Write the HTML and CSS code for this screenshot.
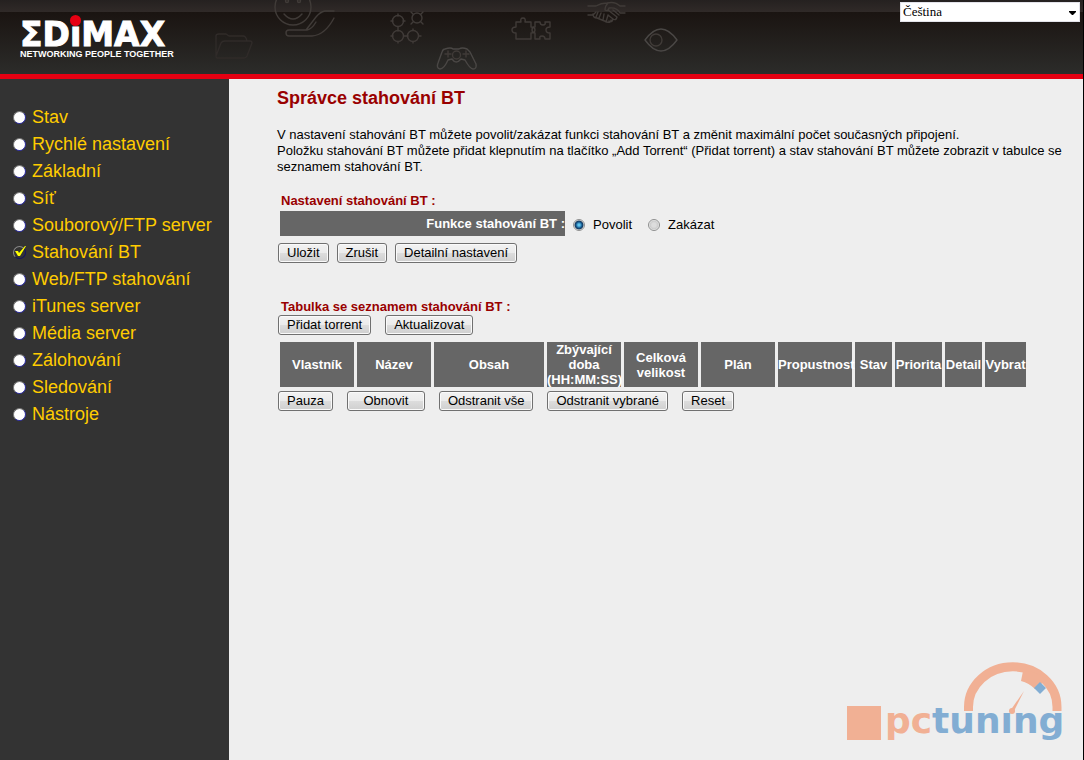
FILE: index.html
```
<!DOCTYPE html>
<html lang="cs">
<head>
<meta charset="utf-8">
<title>Správce stahování BT</title>
<link rel="stylesheet" href="styles.css">
</head>
<body>
<header class="header">
  <svg class="header-art" width="480" height="74" viewBox="210 0 480 74" aria-hidden="true">
    <g fill="none" stroke="#403b38" stroke-width="1.4" stroke-linejoin="round" stroke-linecap="round">
      <path stroke="#302b29" d="M216 56V36q0-2 3-2h7l3 2h14q3 0 4 5M217 58h27q2 0 3-2l5-13q0-2-2-2h-25q-3 0-4 2l-5 13q0 2 1 2"/>
      <circle cx="293" cy="7" r="18"/><path d="M284 14q9 10 18 0"/><circle cx="287" cy="1" r="1.5"/><circle cx="299" cy="1" r="1.5"/>
      <path d="M334 11h-9q-5 1-9 6l-10 13h-17q-3 0-3 3t3 3h23q13-1 22-18M307 30q5-1 9-8"/>
      <circle cx="398" cy="21" r="5.500"/><circle cx="417" cy="18" r="5"/><circle cx="398" cy="36" r="5.500"/><circle cx="413" cy="36" r="5.500"/>
      <path d="M398 14v2M391 21h2M403 21h2M398 27v4M391 36h2M398 42v1M404 36h4M413 29v1M413 42v1M419 36h2M411 12l2 2M423 12l-2 2M411 24l2-2M423 24l-2-2"/>
      <path stroke="#4a4745" d="M445 49q6-2 8 0h6q3-2 8 0l3 3 6 12q1 5-3 5-3 0-8-9l-4-1q-5 6-9 0l-4 1q-4 9-8 9-4-1-2-6l4-11q1-3 3-3z"/>
      <circle cx="456.500" cy="55" r="4"/><path d="M445 54h6M448 51v6M463 54h6M466 51v6"/>
      <path d="M516 39v-6q-4 0-4-3t4-3v-5h5q-1-4 2-4t2 4h6v5q4 0 4 3t-4 3v6zM535 39v-6q-3 0-3-3t3-3v-5h5q0 3 3 3t2-3h5v5q-4 0-4 3t4 3v6h-5q0-3-3-3t-2 3z"/>
      <path d="M588 6h8q5-3 11-3 8-2 13 3h5M588 15h5l3-3M625 13h-5q-3-6-11-5-1 4-4 2 0-4 3-7M593 14q0 4 4 4l5 2 5 2q4 1 4-2M598 12l-2 5M601 13l-2 5M604 14l-1 6M608 15l-2 7M608 10l9 7q-1 4-4 2l-5-4M613 10l6 5M609 21q3 2 4-2"/>
      <path stroke="#4a4745" d="M645 40q16-22 32 0q-16 22-32 0"/><circle cx="656" cy="40" r="6"/>
    </g>
  </svg>
  <a class="brand" href="#">
    <span class="brand-name">ΣDıMAX</span>
    <span class="brand-dot"></span>
    <span class="brand-tag">NETWORKING PEOPLE TOGETHER</span>
  </a>
  <div class="language">
    <select class="language-select" aria-label="Jazyk"><option>Čeština</option></select>
    <svg class="language-arrow" width="7" height="4" viewBox="0 0 7 4" aria-hidden="true"><path d="M0 0h7v1L4 4H3L0 1z"/></svg>
  </div>
</header>
<div class="layout">
  <nav class="sidebar">
    <ul class="menu">
      <li><a href="#">Stav</a></li>
      <li><a href="#">Rychlé nastavení</a></li>
      <li><a href="#">Základní</a></li>
      <li><a href="#">Síť</a></li>
      <li><a href="#">Souborový/FTP server</a></li>
      <li class="current"><a href="#" aria-current="page">Stahování BT</a><svg class="tick" width="12" height="11" viewBox="0 0 12 11" aria-hidden="true"><path d="M1 5h3l1 2 6-7h1L6 10H4z" fill="#ffff00"/></svg></li>
      <li><a href="#">Web/FTP stahování</a></li>
      <li><a href="#">iTunes server</a></li>
      <li><a href="#">Média server</a></li>
      <li><a href="#">Zálohování</a></li>
      <li><a href="#">Sledování</a></li>
      <li><a href="#">Nástroje</a></li>
    </ul>
  </nav>
  <main class="content">
    <h1 class="title">Správce stahování BT</h1>
    <p class="intro">V nastavení stahování BT můžete povolit/zakázat funkci stahování BT a změnit maximální počet současných připojení.<br>Položku stahování BT můžete přidat klepnutím na tlačítko „Add Torrent“ (Přidat torrent) a stav stahování BT můžete zobrazit v tabulce se seznamem stahování BT.</p>

    <h2 class="section-title">Nastavení stahování BT :</h2>
    <div class="setting" role="radiogroup" aria-labelledby="bt-label">
      <span class="setting-label" id="bt-label">Funkce stahování BT :</span>
      <label class="choice"><input type="radio" name="bt" checked>Povolit</label>
      <label class="choice"><input type="radio" name="bt">Zakázat</label>
    </div>
    <div class="buttons buttons-settings">
      <button type="button">Uložit</button>
      <button type="button">Zrušit</button>
      <button type="button">Detailní nastavení</button>
    </div>

    <h2 class="section-title section-list">Tabulka se seznamem stahování BT :</h2>
    <div class="buttons">
      <button type="button">Přidat torrent</button>
      <button type="button">Aktualizovat</button>
    </div>
    <table class="torrents">
      <colgroup><col class="w-m"><col class="w-m"><col class="w-l"><col class="w-m"><col class="w-m"><col class="w-m"><col class="w-m"><col class="w-xs"><col class="w-s"><col class="w-xs"><col class="w-sm"></colgroup>
      <thead>
        <tr><th>Vlastník</th><th>Název</th><th>Obsah</th><th>Zbývající doba (HH:MM:SS)</th><th>Celková velikost</th><th>Plán</th><th>Propustnost</th><th>Stav</th><th>Priorita</th><th>Detail</th><th>Vybrat</th></tr>
      </thead>
    </table>
    <div class="buttons">
      <button type="button">Pauza</button>
      <button type="button" class="wide">Obnovit</button>
      <button type="button">Odstranit vše</button>
      <button type="button">Odstranit vybrané</button>
      <button type="button">Reset</button>
    </div>

    <svg class="watermark" width="220" height="88" viewBox="846 658 220 88" role="img" aria-label="pctuning">
      <rect x="847" y="706" width="34" height="34" fill="#f1b094"/>
      <path d="M968.500 711v-4a44 40 0 0 1 88.500 0v4" fill="none" stroke="#f1b094" stroke-width="9"/>
      <path d="M1023 671l-2 10q8 2 14 8l11-9q-10-10-23-9z" fill="#f1b094"/>
      <path d="M1040 682l6 6-6 6-6-6z" fill="#82add3"/>
      <path d="M1024 691l-11 22-3-2z" fill="#f1b094"/><circle cx="1012" cy="711" r="3" fill="#f1b094"/>
      <text class="watermark-text" x="885" y="733"><tspan fill="#f1b094">pc</tspan><tspan fill="#82add3">tunıng</tspan></text>
    </svg>
  </main>
</div>
</body>
</html>
```
FILE: styles.css
```
* { box-sizing: border-box; }

body {
  margin: 0;
  min-height: 100vh;
  display: flex;
  flex-direction: column;
  border-right: 1px solid #000;
  background: #eee;
  color: #000;
  font: 13px/16px "Liberation Sans", Arial, sans-serif;
}

.header {
  position: relative;
  display: flex;
  justify-content: space-between;
  align-items: flex-start;
  min-height: 79px;
  border-bottom: 5px solid #e60012;
  background:
    linear-gradient(#252120, #302a28) top / 100% 12px no-repeat,
    linear-gradient(#1a1411 12px, #2c2c2a);
}

.header-art { position: absolute; left: 210px; top: 0; }

.brand {
  position: relative;
  display: flex;
  flex-direction: column;
  padding: 20px 0 0 20px;
  color: #fff;
  text-decoration: none;
  white-space: nowrap;
}

.brand-name {
  font: bold 33px/29px "DejaVu Sans", sans-serif;
  -webkit-text-stroke: 1px #fff;
}

.brand-dot {
  position: absolute;
  left: 70px;
  top: 15px;
  width: 11px;
  height: 11px;
  border-radius: 50%;
  background: #e60012;
}

.brand-tag { font: bold 9px/10px "Liberation Sans", Arial, sans-serif; }

.language { position: relative; margin: 2px 3px 0 0; }

.language-select {
  display: block;
  appearance: none;
  width: 180px;
  height: 20px;
  padding: 0 20px 0 2px;
  border: 1px solid #e3e3ea;
  border-radius: 0;
  background: #fff;
  color: #000;
  font: 13px/16px "Liberation Serif", "Times New Roman", serif;
}

.language-arrow { position: absolute; right: 4px; top: 9px; pointer-events: none; }

.layout { flex: 1; display: flex; }

.sidebar { flex: 0 0 229px; padding: 25px 0 24px 13px; background: #333; }

.menu { margin: 0; padding: 0; list-style: none; font-size: 18px; line-height: 27px; }

.menu li { position: relative; display: flex; align-items: center; gap: 7px; }

.menu li::before {
  content: "";
  width: 11px;
  height: 11px;
  border: 1px solid;
  border-color: #777 #2a2aa0 #2a2aa0 #777;
  border-radius: 50%;
  background: #fff;
}

.menu .current::before { background: #333; border-color: #888 #111166 #111166 #888; }

.tick { position: absolute; left: 1px; top: 7px; }

.menu a { color: #fc0; text-decoration: none; }

.menu li { gap: 6px; }

.content {
  position: relative;
  flex: 1;
  min-width: 0;
  padding: 8px 18px 24px 48px;
}

.title { margin: 0 0 18px; color: #900; font-size: 18px; line-height: 22px; }

.intro { margin: 0 0 18px; }

.section-title { margin: 0 0 2px 4px; color: #900; font-size: 13px; line-height: 16px; }

.section-list { margin: 36px 0 0 4px; }

.setting { display: flex; align-items: center; margin-left: 3px; min-height: 25px; }

.setting-label {
  width: 285px;
  background: #666;
  color: #fff;
  font-weight: bold;
  line-height: 25px;
  text-align: right;
}

.choice { display: flex; align-items: center; gap: 8px; margin: 2px 8px 0 8px; }

.choice input {
  appearance: none;
  width: 12px;
  height: 12px;
  margin: 0;
  border: 1px solid #8e8f8f;
  border-radius: 50%;
  background: radial-gradient(#ddd 0 2px, #ccc 4px, #f4f4f4 5px);
}

.choice input:checked { background: radial-gradient(circle at 50% 50%, #5fc5ee 0 1px, #13558c 3px, #17395a 4px, #f4f4f4 5px); }

.buttons { display: flex; gap: 14px; margin-left: 1px; }

.buttons-settings { gap: 8px; margin-top: 7px; }

.buttons button {
  height: 20px;
  padding: 0 8px;
  border: 1px solid #707070;
  border-radius: 3px;
  background: linear-gradient(#f2f2f2, #ebebeb 50%, #ddd 50%, #cfcfcf);
  box-shadow: inset 0 0 0 1px #fafafa;
  color: #000;
  font: 13px/16px "Liberation Sans", Arial, sans-serif;
  white-space: nowrap;
}

.buttons .wide { min-width: 78px; }

.torrents { table-layout: fixed; width: 750px; margin: 4px 0 1px; border-spacing: 3px; }

.torrents th {
  height: 45px;
  padding: 0;
  background: #666;
  color: #fff;
  font-size: 13px;
  line-height: 15px;
}

.w-xs { width: 37px; }
.w-sm { width: 41px; }
.w-s { width: 47px; }
.w-m { width: 74px; }
.w-l { width: 110px; }

.watermark { position: absolute; right: 17px; bottom: 14px; }

.watermark-text { font: bold 36px "DejaVu Sans", sans-serif; }
```
